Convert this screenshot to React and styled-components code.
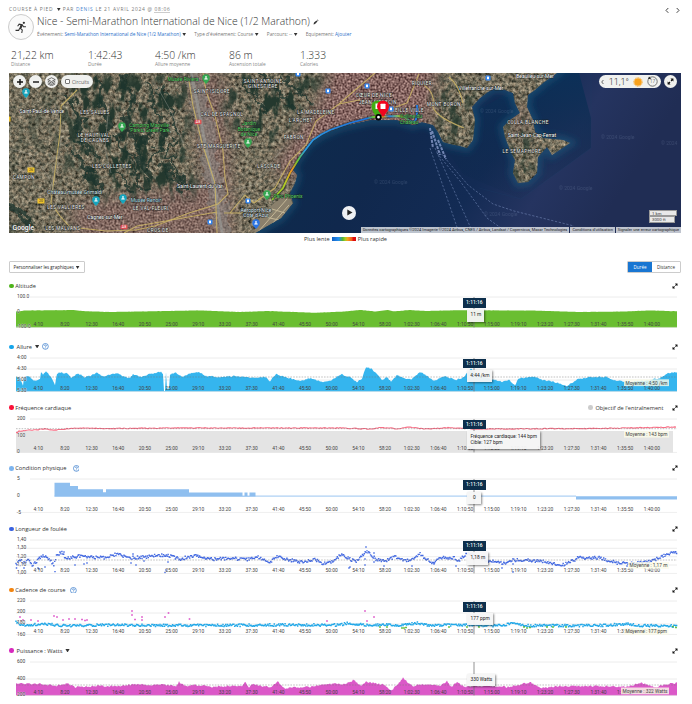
import React from "react";
import styled, { createGlobalStyle } from "styled-components";

const Global = createGlobalStyle`
  * { box-sizing: border-box; }
  body { margin: 0; background: #fff; color: #3a3a3a; font-family: "Open Sans", "Noto Sans", sans-serif; }
`;
const Page = styled.main`
  width: 692px; height: 704px; overflow: hidden; padding: 5px 11px 0 9px;
  display: flex; flex-direction: column;
  > * { flex-shrink: 0; }
`;
const TopLine = styled.div`
  display: flex; justify-content: space-between; height: 9px;
`;
const Crumb = styled.div`
  font-size: 4.9px; line-height: 9px; letter-spacing: 0.7px; color: #777; white-space: pre;
  a { color: #4a86cf; }
  u { text-decoration: none; border-bottom: 0.6px solid #ccc; }
`;
const Arrows = styled.div`
  display: flex; gap: 7px; padding: 2px 1px 0 0;
`;
const TitleRow = styled.header`
  display: flex; gap: 3px; height: 26px;
`;
const Avatar = styled.div`
  width: 26px; height: 26px; margin-left: -1px; border: 1px solid #ccc; border-radius: 50%;
  background: #fafafa; display: grid; place-items: center;
`;
const Title = styled.h1`
  margin: 0; display: flex; align-items: center; gap: 3px;
  font-weight: 300; font-size: 10.36px; line-height: 15px; color: #333; white-space: nowrap;
`;
const Meta = styled.div`
  display: flex; gap: 8px; font-size: 4.76px; line-height: 10px; color: #777; white-space: nowrap;
  a { color: #2a6fc9; }
`;
const Caret = styled.span`
  display: inline-block; width: 4.2px; height: 3.4px; background: #333; clip-path: polygon(0 0, 100% 0, 50% 100%);
  margin-left: ${(p) => p.$gap || 1.5}px;
`;
const Stats = styled.section`
  display: grid; grid-template-columns: 77px 67px 74px 71px auto; height: 33px; padding: 8px 0 0 2px;
`;
const Value = styled.div`
  font-size: 10.35px; line-height: 14px; font-weight: 300; color: #333;
`;
const Label = styled.div`
  font-size: 4.8px; line-height: 5px; color: #888;
`;
const MapBox = styled.section`
  position: relative; width: 672px; height: 160px; overflow: hidden;
  > svg { display: block; }
`;
const MapControls = styled.div`
  position: absolute; top: 2px; left: 4px; right: 4px; display: flex; gap: 2.5px; align-items: center;
`;
const RoundButton = styled.div`
  width: 13.4px; height: 13.4px; border-radius: 50%; background: #f0f1ef; display: grid; place-items: center;
`;
const Pill = styled.div`
  height: 13.4px; border-radius: 7px; background: #f0f1ef; display: flex; align-items: center; gap: ${(p) => p.$gap}px;
  padding: 0 ${(p) => p.$pad}px; font: 300 ${(p) => p.$size}px Roboto, sans-serif; color: #333;
  margin-left: ${(p) => (p.$push ? "auto" : 0)};
`;
const Check = styled.i`
  width: 5.5px; height: 5.5px; border: 0.7px solid #777; border-radius: 1px; background: #fff;
`;
const PlayButton = styled.div`
  position: absolute; left: 333px; top: 132.5px; width: 14px; height: 14px; border-radius: 50%;
  background: #eef0f3; display: grid; place-items: center;
`;
const Attribution = styled.div`
  position: absolute; right: 0; bottom: 0; height: 5.6px; display: flex; gap: 1px; white-space: nowrap;
  span { background: #e8ebeecc; color: #222; padding: 0 2px; font: 3.99px/5.6px Roboto, sans-serif; }
`;
const ScaleBox = styled.div`
  position: absolute; right: 4px; top: 136.5px; width: 28px;
  div { height: 6.6px; border: 0.7px solid #999; background: #e9e9e9; font: 4.3px/5px Roboto, sans-serif; padding-left: 2px; }
  div + div { width: 25.5px; }
`;
const Legend = styled.div`
  height: 12px; display: flex; justify-content: center; align-items: center; gap: 2px;
  font-size: 5.65px; padding-left: 1px; color: #333;
`;
const Speed = styled.i`
  width: 24px; height: 3.6px;
  background: linear-gradient(90deg, #1261c4, #248ff0 28%, #55b52e 45%, #a8cc22 55%, #f6a01b 65%, #ef5a20 83%, #e00d0d 88%);
`;
const Toolbar = styled.div`
  display: flex; justify-content: space-between; margin: 16px 0 8px; height: 12px;
`;
const Button = styled.div`
  width: 76px; height: 12px; border: 0.8px solid #ccc; border-radius: 1px; padding-left: 3.5px;
  font-size: 4.5px; line-height: 10px; color: #222; white-space: nowrap;
`;
const Toggle = styled.div`
  display: flex; width: 54px; height: 12px; border: 0.8px solid #ccc; border-radius: 1px; overflow: hidden;
`;
const Option = styled.div`
  flex: ${(p) => (p.$active ? "0 0 24px" : "1")}; text-align: center; font-size: 4.5px; line-height: 10.5px;
  background: ${(p) => (p.$active ? "#1976d2" : "#fff")}; color: ${(p) => (p.$active ? "#fff" : "#333")};
`;
const ChartSection = styled.section`
  position: relative; height: 60.8px;
  > svg { display: block; }
`;
const ChartHeader = styled.div`
  height: 10px; display: flex; align-items: center; font-size: 5.68px; color: #333; padding-right: 3px; white-space: nowrap;
`;
const Dot = styled.i`
  width: 4.6px; height: 4.6px; border-radius: 50%; background: ${(p) => p.$color}; margin-right: ${(p) => p.$gap}px;
`;
const Spacer = styled.div`
  flex: 1;
`;
const Goal = styled.div`
  display: flex; align-items: center; margin-right: 8.5px; font-size: 5.6px;
`;
const HelpIcon = styled.svg`
  width: 6.8px; height: 6.8px; margin-left: ${(p) => p.$gap}px;
`;
const Flag = styled.div`
  position: absolute; left: 454px; top: 17px; width: 22.7px; height: 9.6px; background: #0d2f4c; color: #fff;
  font: 500 4.9px/9.6px Roboto, sans-serif; text-align: center;
`;
const Tip = styled.div`
  position: absolute; left: 458.4px; top: 28.3px; width: ${(p) => p.$w}px; padding: 3px 0; box-shadow: 0.5px 1px 2px #0007;
  background: #f6f6f6f2; color: #222; font: 4.85px/6.2px Roboto, sans-serif; text-align: ${(p) => (p.$left ? "left" : "center")};
  padding-left: ${(p) => (p.$left ? 3 : 0)}px; white-space: pre;
`;

const Expand = ({ size = 6 }) => (
  <svg width={size} height={size} viewBox="0 0 12 12" fill="#111">
    <path d="M6 1h5v5L9.2 4.3 7.6 5.9 6.1 4.4l1.6-1.6zM1 6l1.8 1.7 1.6-1.6 1.5 1.5-1.6 1.6L6 11H1z" />
  </svg>
);

/* Deterministic noise so that every render draws the same curves */
const makeRandom = (seed) => {
  let s = seed;
  return () => ((s = (s * 16807) % 2147483647) - 1) / 2147483646;
};
const interp = (pts, x) => {
  for (let i = 1; i < pts.length; i++) {
    if (x <= pts[i][0]) {
      const [a, b] = [pts[i - 1], pts[i]];
      return a[1] + ((b[1] - a[1]) * (x - a[0])) / (b[0] - a[0]);
    }
  }
  return pts[pts.length - 1][1];
};
const samples = (pts, noise, seed, step = 1) => {
  const r = makeRandom(seed);
  const out = [];
  for (let x = 16; x <= 677; x += step) out.push([x, interp(pts, x) + (r() - 0.5) * noise]);
  return out;
};
const areaPath = (pts, base) => `M16 ${base}${pts.map(([x, y]) => `L${x} ${y.toFixed(2)}`).join("")}L677 ${base}Z`;

const TICKS = Array.from({ length: 24 }, (_, i) => {
  const total = (i + 1) * 250;
  const h = Math.floor(total / 3600);
  const m = Math.floor((total % 3600) / 60);
  const s = String(total % 60).padStart(2, "0");
  return h ? `${h}:${String(m).padStart(2, "0")}:${s}` : `${m}:${s}`;
});

const altitude = samples([[16, 14.5], [26, 13.5], [72, 13], [85, 14.2], [110, 15], [200, 13.4], [240, 15], [268, 14], [315, 15.8], [345, 14.5], [360, 12.9], [375, 14.5], [388, 13], [394, 14.4], [410, 13], [425, 14], [460, 13.2], [535, 13.6], [580, 15], [625, 14.5], [650, 13.4], [677, 14.3]], 0.2, 9);
const pace = samples([[16, 19], [20, 20], [23, 27], [24, 20], [29, 18], [34, 23], [40, 21], [41, 14], [43, 16], [46, 13], [51, 19], [55, 27], [57, 16], [61, 14], [64, 16], [67, 15], [71, 20], [78, 15], [84, 19], [90, 18], [97, 15], [103, 18], [117, 15], [125, 19], [130, 20], [133, 16], [140, 19], [150, 16], [161, 14], [163, 16], [164, 33], [165, 33], [166, 14], [167, 31], [169, 31], [170, 16], [176, 15], [182, 19], [191, 15], [199, 14], [205, 18], [220, 19], [235, 18], [250, 20], [265, 19], [270, 23], [276, 16], [288, 20], [302, 23], [310, 20], [322, 24], [332, 22], [341, 16], [350, 19], [357, 24], [362, 21], [366, 9], [372, 11], [382, 22], [387, 19], [391, 24], [397, 17], [405, 21], [412, 21], [420, 14], [427, 18], [435, 23], [445, 18], [456, 22], [464, 19], [471, 10], [478, 17], [488, 20], [502, 24], [509, 22], [515, 27], [519, 20], [535, 19], [543, 22], [555, 24], [567, 28], [578, 21], [590, 19], [606, 19], [617, 23], [632, 24], [650, 22], [660, 20], [668, 15], [677, 14]], 1.4, 81);
const pulse = samples([[16, 14], [19, 12], [45, 10], [55, 11], [75, 9], [100, 9.5], [190, 9], [340, 9], [370, 10], [382, 8.6], [400, 10], [407, 8], [425, 10], [450, 8.7], [475, 10], [600, 9.5], [677, 8]], 0.8, 15, 1.5);
const stride = samples([[16, 25], [20, 20], [24, 23], [28, 19], [32, 25], [36, 22], [42, 16], [48, 18], [54, 25], [57, 14], [62, 13], [66, 19], [78, 16], [92, 17], [104, 18], [117, 14], [127, 18], [145, 17], [160, 15], [170, 16], [180, 19], [197, 15], [206, 19], [220, 19], [232, 18], [245, 20], [258, 17], [270, 23], [277, 16], [289, 20], [302, 22], [315, 19], [322, 24], [332, 22], [341, 15], [350, 19], [356, 22], [367, 11], [376, 19], [385, 21], [395, 17], [409, 21], [420, 14], [432, 23], [442, 18], [454, 18], [459, 20], [468, 13], [476, 17], [490, 21], [505, 24], [512, 20], [540, 21], [563, 25], [578, 18], [600, 18], [617, 23], [640, 23], [652, 21], [667, 14], [677, 12]], 3, 44, 0.9);
const cadence = samples([[16, 21.5], [23, 24], [45, 23], [68, 25], [100, 24], [180, 24.5], [280, 24], [340, 24], [347, 22.5], [365, 24], [405, 24], [418, 22], [425, 24], [500, 24.5], [513, 22.5], [525, 24.7], [600, 24.5], [629, 23], [640, 24.5], [677, 25]], 2.4, 73, 0.9);
const power = samples([[16, 22], [40, 21.5], [54, 24], [68, 21.5], [75, 25], [100, 24], [122, 24], [133, 22], [148, 23], [160, 22.5], [176, 24], [179, 20], [185, 24], [196, 23], [212, 25], [230, 24], [242, 24], [245, 19.5], [249, 25], [252, 22], [270, 25.5], [278, 20], [284, 26], [309, 25], [326, 22], [345, 22], [354, 18], [361, 24], [366, 20], [374, 21], [384, 23], [391, 29], [397, 23], [403, 16], [412, 24], [424, 22], [440, 24], [447, 19], [451, 25], [457, 20], [464, 25], [480, 24], [510, 25], [530, 20], [540, 26], [560, 24], [600, 24], [625, 25], [642, 21], [655, 25], [668, 22], [677, 21]], 1.8, 64);

const Dots = ({ points, color, size = 1.45 }) => (
  <path fill={color} d={points.map(([x, y]) => `M${(x - size / 2).toFixed(2)} ${(y - size / 2).toFixed(2)}h${size}v${size}h-${size}z`).join("")} />
);
const strideOutliers = [[16.5, 28], [24, 28], [38, 28], [39, 29], [45, 27], [55, 31.6], [75, 25], [84, 24], [87, 23], [131, 23], [133, 14], [136, 25], [165, 32.5], [166, 30], [168, 22], [349, 28], [350, 27], [365, 19], [366, 7], [365, 25], [374, 13], [374, 22], [384, 26], [412, 26], [434, 24], [456, 26], [470, 10], [502, 28], [513, 24], [513, 32], [627, 26], [144, 21], [60, 12], [64, 12]];
const cadenceHigh = [[20, 16], [23, 19], [31, 19], [38, 20], [54, 15], [57, 16], [63, 19], [69, 18], [75, 18], [82, 18.5], [85, 19.5], [87, 19], [132, 10], [132, 14], [135, 18.5], [142, 16], [142, 19], [165, 16], [168.5, 12], [189.5, 18], [327, 20], [365, 10], [367, 20], [374, 16]];
const cadenceLow = [[380, 26], [387, 26], [402, 27], [404, 27], [406, 26.5], [449, 26], [467, 26], [479, 26], [524, 26], [527, 27], [530, 26.5], [547, 26], [553, 26], [566, 26], [673, 25.5], [676, 26.5]];

const CHARTS = [
  { title: "Altitude", color: "#4eb31b", labels: [["100.0", 0], ["0", 15], ["-100.0", 29.8]], grid: [0], bottom: 30.4, tickY: 27.1, tip: "11 m", tipW: 17,
    draw: <path d={areaPath(altitude, 30.4)} fill="#6abe31" /> },
  { title: "Allure", caret: true, help: 3, color: "#16a5ea", labels: [["4:00", 0], ["4:30", 11], ["5:00", 21.8], ["5:30", 32.8]], grid: [0, 11, 22], bottom: 33.4, tickY: 30.2, tip: "4:44 /km", tipW: 25,
    avg: "Moyenne : 4:50 /km", avgX: 624, avgY: 21.3, avgW: 45, avgLine: 19, draw: <path d={areaPath(pace, 33.4)} fill="#35b5ee" /> },
  { title: "Fréquence cardiaque", goal: true, color: "#fa1139", labels: [["200", 0], ["100", 16.8], ["0", 32.8]], grid: [0], bottom: 33.4, tickY: 29.8, tip: "Fréquence cardiaque: 144 bpm\nCible: 127 bpm", tipW: 72.5, tipLeft: true,
    avg: "Moyenne : 143 bpm", avgX: 624, avgY: 11.8, avgW: 45, avgLine: 9.7,
    draw: <><path d="M16 12h657v21.4H16z" fill="#e4e4e4" /><path d={`M${pulse.map((p) => p.join(" ")).join("L")}`} fill="none" stroke="#f76f86" strokeWidth="1.1" /></> },
  { title: "Condition physique", help: 6, color: "#7db4ee", labels: [["5", 0], ["0", 17], ["-5", 33.4]], grid: [0], bottom: 33.4, tickY: 30.4, tip: "0", tipW: 14,
    draw: <><path d="M54.5 17.5V3.8H70V7h8v3.3h25v3h3v-3h83v3.3h53.5v3.4h2v-3.4h3v3.4h2v-3.4h6v3.9z" fill="#8fbfef" /><path d="M54.5 17.1H576" stroke="#8fbfef" strokeWidth=".9" /><path d="M576 17.2h101v3.4H576z" fill="#8fbfef" /></> },
  { title: "Longueur de foulée", color: "#3a62e0", labels: [["1,40", 0], ["1,30", 8.3], ["1,20", 16.7], ["1,10", 25], ["1,00", 33.3]], grid: [0, 8.3, 16.7, 25], bottom: 33.4, tickY: 30.2, tip: "1,18 m", tipW: 21,
    avg: "Moyenne : 1,17 m", avgX: 628, avgY: 22, avgW: 41, avgLine: 20, draw: <Dots points={[...stride, ...strideOutliers]} color="#456be2" /> },
  { title: "Cadence de course", help: 5, color: "#f28511", labels: [["220", 0], ["200", 11.2], ["180", 22.3], ["160", 33.4]], grid: [0, 12, 23], bottom: 33.4, tickY: 30.4, tip: "177 ppm", tipW: 25.5,
    avg: "Moyenne : 177 ppm", avgX: 624, avgY: 27, avgW: 44.5,
    draw: <><Dots points={cadence} color="#22a8e8" size={1.5} /><Dots points={cadenceHigh} color="#da4ac5" size={1.6} /><Dots points={cadenceLow} color="#54b82b" size={1.7} /></> },
  { title: "Puissance : Watts", caret: true, color: "#d629bd", labels: [["600", 0], ["400", 16.9], ["200", 33]], grid: [0, 17], bottom: 33.4, tickY: 30.2, tip: "330 Watts", tipW: 28, noFlag: true,
    avg: "Moyenne : 322 Watts", avgX: 621, avgY: 25.5, avgW: 48, avgLine: 23, draw: <path d={areaPath(power, 33.4)} fill="#db58c8" /> },
];

const Help = ({ gap }) => (
  <HelpIcon $gap={gap} viewBox="0 0 14 14" fill="none" stroke="#2a72c9" strokeWidth="1.4">
    <circle cx="7" cy="7" r="6" /><path d="M5 5.6Q5 4 7 4T9 5.6Q9 6.6 7.6 7.2 7 7.5 7 8.6M7 9.6v1.4" />
  </HelpIcon>
);

const Chart = ({ c }) => (
  <ChartSection>
    <ChartHeader>
      <Dot $color={c.color} $gap={c.caret ? 3 : 1.7} />
      {c.title}
      {c.caret && <Caret $gap={3} />}
      {c.help && <Help gap={c.help} />}
      <Spacer />
      {c.goal && <Goal><Dot $color="#ccc" $gap={2.5} />Objectif de l'entraînement</Goal>}
      <Expand />
    </ChartHeader>
    <svg width="672" height="42" viewBox="9 -6 672 42" fontFamily="Roboto, sans-serif" fontSize="4.9" fill="#444">
      {c.grid.map((y) => <path key={y} d={`M${y === 0 ? 30 : 16} ${y}H677`} stroke="#e7e7e7" strokeWidth=".8" />)}
      {c.draw}
      <path d={`M16 ${c.bottom}H677`} stroke="#ddd" strokeWidth=".5" />
      {c.avgLine && <path d={`M16 ${c.avgLine}H677`} stroke="#777" strokeOpacity=".65" strokeWidth=".7" strokeDasharray="1.6 1.2" />}
      <path d={`M474 0V${c.bottom}`} stroke="#777" strokeWidth=".8" />
      {c.labels.map(([t, y]) => <text key={t} x="17" y={y + 1.1} stroke="#fff" strokeOpacity=".6" strokeWidth=".7" paintOrder="stroke">{t}</text>)}
      {TICKS.map((t, i) => <text key={t} x={38.2 + i * 26.68} y={c.tickY + 1.6} textAnchor="middle">{t}</text>)}
      {c.avg && (
        <g>
          <rect x={c.avgX} y={c.avgY} width={c.avgW} height="6.8" fill="#fbfbe9" fillOpacity=".8" />
          <text x={c.avgX + 1.5} y={c.avgY + 5.2} textLength={c.avgW - 3} lengthAdjust="spacingAndGlyphs">{c.avg}</text>
        </g>
      )}
    </svg>
    {!c.noFlag && <Flag>1:11:16</Flag>}
    <Tip $w={c.tipW} $left={c.tipLeft}>{c.tip}</Tip>
  </ChartSection>
);

const LAND = "M0 0H548L534 10 526 17 519 22 518 34 524 47 526 59 534 65 554 67 561 70 543 82 538 74 529 84 528 100 519 109 509 110 504 100 506 87 501 77 496 64 494 54 501 47 511 40 506 30 504 20 496 17 488 14 479 19 471 25 463 34 466 47 464 67 458 75 451 73 441 71 434 69 429 59 424 52 413 49 404 52 398 50 388 47 361 47 334 53 314 61 299 71 288 87 283 96 288 102 286 110 281 120 284 130 272 145 246 160H0Z";
const ROUTE = "M263 127L274 115 281 100 291 84 304 67Q312 61 321 57L341 50 364 44 388 43Q395 43 398 46T404 49 408 42L408 32";

const PLACES = [
  ["SAINT-ANTOINE", 254, 10], ["GINESTIÈRE", 254, 15], ["CŒUR DE NICE", 365, 24], ["JEAN-MÉDECIN", 369, 31], ["RIQUIER", 413, 12],
  ["MONT BORON", 435, 33], ["LA MADELEINE", 307, 41], ["L'ARCHET", 292, 49], ["FABRON", 285, 66], ["LASCADE", 260, 95], ["VIEILLE VILLE", 398, 39],
  ["SAINT-ISIDORE", 203, 20], ["CAL DE SPAGNOL", 213, 43], ["STE MARGUERITE", 210, 75], ["LES SALLES", 86, 41], ["LE HAUT VAL", 85, 64],
  ["DE CAGNES", 86, 69], ["LES COLLETTES", 103, 95], ["CAMPON", 15, 106], ["LES VALLIÈRES", 57, 136], ["LE VAL FLEURI", 142, 136.5],
  ["LES MALVANS", 54, 157], ["CROS DE", 149, 159], ["COLLA BLANCHE", 519, 51], ["LE SÉMAPHORE", 513, 79.5],
];
const TOWNS = [
  ["Saint-Paul-de-Vence", 33, 39.5, "#fff"], ["Cagnes-sur-Mer", 96, 146, "#fff"], ["Saint-Laurent-du-Var", 191, 115, "#fff"],
  ["Château-musée Grimaldi", 66, 121, "#d8e8ee"], ["Musée Renoir", 137, 129, "#a9dce4"], ["Villefranche-sur-Mer", 472, 16.5, "#fff"],
  ["Beaulieu-sur-Mer", 526, 5, "#fff"], ["Saint-Jean-Cap-Ferrat", 523, 63.5, "#fff"], ["Aéroport Nice", 247, 138.5, "#dce7f5"], ["Côte d'Azur", 247, 144, "#dce7f5"],
  ["Camping Maoville", 140, 53.5, "#58cf62"], ["Parks, Green Park", 141, 59, "#58cf62"], ["Musée Riviera", 174, 8, "#58cf62"], ["Jardin", 240, 52, "#58cf62"],
  ["Botanique", 240, 57.5, "#58cf62"], ["de Nice", 240, 63, "#58cf62"], ["Parc Phoenix", 279, 125, "#58cf62"], ["Colline du", 402, 45, "#58cf62"], ["Château", 400, 50.5, "#58cf62"],
];
const PINS = [[17, 19, "#17a5bd"], [87, 127, "#17a5bd"], [114, 125, "#17a5bd"], [113, 53, "#36a852"], [197, 5, "#36a852"], [239, 69, "#36a852"], [258, 121, "#36a852"], [247, 150, "#2b74e2"]];
const ROADS = [
  "M68 17Q61 24 52 33L51 60 45 105 42 130 51 143 61 154 97 158 127 157 146 153 180 140 209 131 219 121 216 105 214 78 206 43 197 18 194 0",
  "M208 160L206 110 193 70 184 33 180 8", "M221 140Q229 130 236 122L245 130 266 115 281 88 297 72 307 48 330 31 345 18 366 0",
  "M330 31L350 27 381 36 398 30 410 1", "M415 12Q426 20 424 31T455 55", "M440 4Q450 12 454 30", "M115 160L128 153 208 139", "M215 140L232 140 239 136",
];

const MapDrawing = () => (
  <svg width="672" height="160" viewBox="0 0 672 160">
    <defs>
      <linearGradient id="sea" x1="0" x2="1" y1="0" y2=".15">
        <stop offset=".38" stopColor="#0c2c4c" /><stop offset=".62" stopColor="#10284d" /><stop offset=".78" stopColor="#132b54" /><stop offset=".88" stopColor="#253460" /><stop offset="1" stopColor="#202d54" />
      </linearGradient>
      <linearGradient id="deep" x1="0" x2="0" y1="0" y2="1"><stop offset="0" stopColor="#0c3058" /><stop offset="1" stopColor="#0d2749" stopOpacity=".1" /></linearGradient>
      <linearGradient id="pace" gradientUnits="userSpaceOnUse" x1="262" y1="127" x2="408" y2="40">
        <stop offset="0" stopColor="#86c92b" /><stop offset=".12" stopColor="#b4cc25" /><stop offset=".2" stopColor="#ef8f23" /><stop offset=".25" stopColor="#6ec72c" /><stop offset=".32" stopColor="#2d9bdf" /><stop offset=".73" stopColor="#1b72df" /><stop offset=".77" stopColor="#6fc52b" /><stop offset=".82" stopColor="#df9c21" /><stop offset=".85" stopColor="#2480e5" /><stop offset=".91" stopColor="#a4cf26" /><stop offset=".96" stopColor="#2480e5" />
      </linearGradient>
      <filter id="ground" x="0" y="0" width="1" height="1" colorInterpolationFilters="sRGB">
        <feTurbulence type="fractalNoise" baseFrequency=".3" numOctaves="4" seed="7" />
        <feColorMatrix values=".85 .2 0 0 -.07  .75 .25 0 0 -.07  .65 .25 0 0 -.09  0 0 0 0 1" />
      </filter>
      <filter id="woods" x="0" y="0" width="1" height="1" colorInterpolationFilters="sRGB">
        <feTurbulence type="fractalNoise" baseFrequency=".1 .05" numOctaves="4" seed="21" />
        <feColorMatrix values="0 0 0 0 .14  0 0 0 0 .22  0 0 0 0 .18  6 0 0 0 -2.95" />
      </filter>
      <filter id="soft" x="-.2" y="-.2" width="1.4" height="1.4"><feGaussianBlur stdDeviation="8" /></filter>
      <filter id="shoal" x="-.1" y="-.1" width="1.2" height="1.2"><feGaussianBlur stdDeviation="3" /></filter>
      <filter id="ragged" x="-.1" y="-.1" width="1.2" height="1.2" colorInterpolationFilters="sRGB">
        <feTurbulence type="fractalNoise" baseFrequency=".11" numOctaves="3" seed="5" />
        <feDisplacementMap in="SourceGraphic" scale="20" xChannelSelector="R" yChannelSelector="G" />
      </filter>
      <filter id="town" x="0" y="0" width="1" height="1" colorInterpolationFilters="sRGB">
        <feTurbulence type="fractalNoise" baseFrequency=".5" numOctaves="3" seed="3" />
        <feColorMatrix values=".9 0 0 0 .07  .85 0 0 0 -.03  .8 0 0 0 -.02  0 0 0 0 1" />
      </filter>
      <clipPath id="landClip"><path d={LAND} /></clipPath>
      <mask id="forest"><g fill="#fff" filter="url(#soft)"><path d="M50 0H180L178 80 190 120 135 122 80 125 60 80 45 45Z" /><path d="M215 0H315L285 55 255 75 218 50Z" /><path d="M0 120L25 150V160H0Z" /><path d="M424 5L465 10 460 75 430 65ZM495 30L525 55 525 110 500 110Z" fill="#ccc" /><path d="M0 0H60V110H0Z" fill="#444" /></g></mask>
      <mask id="urban"><g filter="url(#soft)"><path d="M325 -20H430L418 65 345 65 300 85 285 110 265 95 310 30Z" fill="#fff" /><path d="M60 132L195 110 180 0 215 0 225 170H70Z" fill="#bbb" /><path d="M500 30L520 40 520 60 505 60Z" fill="#999" /></g></mask>
    </defs>
    <rect width="672" height="160" fill="url(#sea)" />
    <path d="M548 0H570L582 45V75L512 126 455 102 425 60 500 20Z" fill="url(#deep)" />
    <path d="M582 0V75L512 126 470 115" fill="none" stroke="#1d4d72" strokeOpacity=".15" />
    <path d={LAND} fill="none" stroke="#1c5c80" strokeOpacity=".55" strokeWidth="8" filter="url(#shoal)" />
    <g clipPath="url(#landClip)">
      <rect width="672" height="160" filter="url(#ground)" />
      <g mask="url(#urban)"><rect width="672" height="160" filter="url(#town)" /></g>
      <g mask="url(#forest)"><rect width="672" height="160" filter="url(#woods)" /></g>
      <g fill="none" stroke="#1b332c" strokeOpacity=".75" strokeLinecap="round" filter="url(#ragged)">
        <path strokeWidth="5" d="M62 27L72 47 68 64 85 80M90 5L93 31 100 50 98 69M115 5L126 30 117 47 124 65 130 82M73 94L87 108 92 121M142 54L134 70 130 86 141 104M1 131L10 140 24 155M155 92L168 107 177 118" />
        <path strokeWidth="3" d="M108 60L112 75 124 84M160 65L145 79 135 98M138 9L144 34 155 48M105 98L116 104 121 119M232 7L246 24 257 36M251 2L270 18 282 33M271 3L288 17 299 30M120 85L128 105 134 118M165 70L158 84 170 100M150 15L162 35 170 60M58 75L75 90 80 105" />
      </g>
      <path d="M180 0L190 0 200 33 205 70 216 112 222 160H208L198 116 192 78 183 35Z" fill="#8b8b88" opacity=".45" filter="url(#ragged)" />
      <path d="M182 0L189 33 197 75 206 116 213 160" stroke="#9a9b98" strokeWidth="3" opacity=".6" fill="none" />
      <path d="M245 160L251 145 265 130 279 121 284 131 271 147 258 160Z" fill="#8a806c" />
      <path d="M249 159L278 126M255 160L280 132M256 144L270 147M263 136L276 140" stroke="#c4b797" strokeWidth="1" fill="none" />
      {ROADS.map((d) => <path key={d} d={d} fill="none" stroke="#ccb566" strokeWidth="1.1" opacity=".85" />)}
      <path d="M0 75L20 81 38 100 51 130M45 30Q57 60 49 82T44 120M100 30L96 75 102 100M146 10L163 40 174 70M220 118L245 112 274 75" fill="none" stroke="#a5a297" strokeWidth=".6" opacity=".7" />
    </g>
    <g fill="none" stroke="#92a8d8" strokeWidth=".7" strokeDasharray="2.3 1.6" opacity=".6">
      <path d="M426 75L464 160M430 78L459 112 484 131 505 138 565 153M421 75L450 160M428 80L451 108 478 145 492 155" />
    </g>
    <path d="M421 55L424 75M423 58L431 82M429 67L437 86" stroke="#9bacdc" strokeWidth="2" strokeDasharray="3 1" opacity=".7" />
    <path d={ROUTE} fill="none" stroke="#1a2633" strokeWidth="3" strokeOpacity=".55" />
    <path d={ROUTE} fill="none" stroke="url(#pace)" strokeWidth="1.8" />
    <g fontFamily="Roboto, sans-serif" textAnchor="middle" paintOrder="stroke" stroke="#18201e" strokeOpacity=".75" strokeWidth="1">
      {PLACES.map(([t, x, y]) => <text key={t} x={x} y={y} fontSize="4.6" letterSpacing=".45" fill="#f3f3f0">{t}</text>)}
      {TOWNS.map(([t, x, y, f]) => <text key={t} x={x} y={y} fontSize="5" fill={f}>{t}</text>)}
    </g>
    <g fontFamily="Roboto, sans-serif" fontSize="5" fill="#a7b8d6" opacity=".18">
      <text x="365" y="111">© 2024 Google</text><text x="471" y="40">© 2024 Google</text><text x="592" y="66">© 2024 Google</text><text x="550" y="117">© 2024 Google</text><text x="475" y="143">© 2024 Google</text><text x="652" y="72">© 2024</text>
    </g>
    {PINS.map(([x, y, f]) => (
      <g key={`${x}-${y}`}><path d={`M${x} ${y + 6}Q${x - 3.8} ${y + 2} ${x - 3.8} ${y}A3.8 3.8 0 1 1 ${x + 3.8} ${y}Q${x + 3.8} ${y + 2} ${x} ${y + 6}`} fill={f} /><path d={`M${x - 1.7} ${y + 1}h3.4M${x} ${y - 2}v3`} stroke="#fff" strokeWidth="1.2" /></g>
    ))}
    {[[289, 1], [319, 18], [358, 13], [479, 5], [239, 128], [201, 149], [382, 36]].map(([x, y]) => (
      <g key={`${x}-${y}`}><rect x={x - 2.5} y={y - 2.5} width="5" height="5" rx="1" fill="#3284ed" /><rect x={x - 1} y={y - 1.4} width="2" height="2.6" fill="#fff" /></g>
    ))}
    <g fontFamily="Roboto, sans-serif" fontSize="3.5" textAnchor="middle">
      {[[22, 97, "26"], [32, 128, "20"]].map(([x, y, t]) => <g key={t}><rect x={x - 3.5} y={y - 2.5} width="7" height="5" fill="#efc22c" /><text x={x} y={y + 1.3} fill="#333">{t}</text></g>)}
      <rect x="0" y="43.5" width="1.5" height="5" fill="#efc22c" />
      {[[189, 49], [115, 154]].map(([x, y]) => <g key={x}><rect x={x - 3.5} y={y - 2.3} width="7" height="4.6" rx="1" fill="#d84c52" /><text x={x} y={y + 1.2} fill="#fff">A8</text></g>)}
    </g>
    <path d="M369 46Q362.5 38 362.5 33.5A6 6 0 0 1 374.5 33.5Q374.5 38 369 46" fill="#42ae13" /><rect x="366.5" y="30.5" width="5" height="5.5" fill="#fff" />
    <circle cx="369.5" cy="44.2" r="2.3" fill="#fff" stroke="#000" strokeWidth="1.8" />
    <path d="M374 44Q368 36.5 368 33.5A6 6 0 0 1 380 33.5Q380 37 374 44" fill="#f0051f" /><rect x="371.5" y="30.8" width="5" height="5.2" rx=".5" fill="#fff" />
    <text x="3.5" y="157" fontFamily="Roboto, sans-serif" fontWeight="500" fontSize="6.8" fill="#fff" stroke="#333" strokeWidth=".4" paintOrder="stroke">Google</text>
  </svg>
);

export default function App() {
  return (
    <Page>
      <Global />
      <TopLine>
        <Crumb>COURSE À PIED <Caret /> PAR <a>DENIS</a> LE 21 AVRIL 2024 @ <u>08:06</u></Crumb>
        <Arrows>
          <svg width="4" height="7" viewBox="0 0 4 7"><path d="M3.3 1L1 3.4l2.3 2.4" fill="none" stroke="#444" /></svg>
          <svg width="4" height="7" viewBox="0 0 4 7"><path d="M.7 1L3 3.4.7 5.8" fill="none" stroke="#444" /></svg>
        </Arrows>
      </TopLine>
      <TitleRow>
        <Avatar>
          <svg width="12.5" height="12.5" viewBox="0 0 24 24" fill="none" stroke="#333" strokeWidth="2">
            <circle cx="17" cy="3.5" r="2.2" fill="#333" stroke="none" /><path d="M5 10l3-4 6 1 2 4h5M13 8l-3 6 4 3-1 6M9 14l-2 4H1" /><path d="M12.5 8l-2 6" strokeWidth="4" />
          </svg>
        </Avatar>
        <div>
          <Title>Nice - Semi-Marathon International de Nice (1/2 Marathon)
            <svg width="6" height="6" viewBox="0 0 12 12" fill="#333"><path d="M1 11l1-4 5-4 2 2-5 5zM8 2l1-1 2 2-1 1z" /></svg>
          </Title>
          <Meta>
            <span>Événement: <a>Semi-Marathon International de Nice (1/2 Marathon)</a><Caret /></span>
            <span>Type d'événement: Course<Caret /></span>
            <span>Parcours: --<Caret /></span>
            <span>Equipement: <a>Ajouter</a></span>
          </Meta>
        </div>
      </TitleRow>
      <Stats>
        {[["21,22 km", "Distance"], ["1:42:43", "Durée"], ["4:50 /km", "Allure moyenne"], ["86 m", "Ascension totale"], ["1.333", "Calories"]].map(([v, l]) => (
          <div key={l}><Value>{v}</Value><Label>{l}</Label></div>
        ))}
      </Stats>
      <MapBox>
        <MapDrawing />
        <MapControls>
          <RoundButton><svg width="8" height="8" viewBox="0 0 8 8"><path d="M4 1v6M1 4h6" stroke="#111" strokeWidth="1.4" /></svg></RoundButton>
          <RoundButton><svg width="8" height="8" viewBox="0 0 8 8"><path d="M1 4h6" stroke="#111" strokeWidth="1.4" /></svg></RoundButton>
          <RoundButton><svg width="9" height="9" viewBox="0 0 12 12" fill="none" stroke="#333" strokeWidth=".9"><path d="M6 1l5 2.5L6 6 1 3.5zM1 5.5L6 8l5-2.5M1 7.5L6 10l5-2.5M1 9.3l5 2.4 5-2.4" /></svg></RoundButton>
          <Pill $gap={1.8} $pad={4} $size={5.2}><Check />Circuits</Pill>
          <Pill $push $gap={4.3} $pad={2.7} $size={9}>
            <svg width="3" height="6" viewBox="0 0 3 6"><path d="M2.4 1L.7 3l1.7 2" fill="none" stroke="#444" strokeWidth=".8" /></svg>
            11,1°
            <svg width="10" height="10" viewBox="0 0 10 10"><circle cx="5" cy="5" r="3.8" fill="#f9a11b" /><circle cx="5" cy="5" r="4.4" fill="none" stroke="#fbb64e" strokeDasharray="1 .7" /></svg>
            <svg width="11" height="11" viewBox="0 0 11 11"><circle cx="5.5" cy="5.5" r="4.7" fill="none" stroke="#444" strokeWidth=".7" /><path d="M2 .5l2.3 2.3L1 3z" fill="#222" /><text x="5.5" y="7.3" fontSize="5" textAnchor="middle" fill="#333">17</text></svg>
          </Pill>
          <RoundButton><Expand size={7} /></RoundButton>
        </MapControls>
        <PlayButton><svg width="7" height="7" viewBox="0 0 7 7"><path d="M1.3.4L6.5 3.5 1.3 6.6z" fill="#222" /></svg></PlayButton>
        <ScaleBox><div>1 km</div><div>3000 ft</div></ScaleBox>
        <Attribution><span>Données cartographiques ©2024 Imagerie ©2024 Airbus, CNES / Airbus, Landsat / Copernicus, Maxar Technologies</span><span>Conditions d'utilisation</span><span>Signaler une erreur cartographique</span></Attribution>
      </MapBox>
      <Legend>Plus lente<Speed />Plus rapide</Legend>
      <Toolbar>
        <Button>Personnaliser les graphiques<Caret /></Button>
        <Toggle><Option $active>Durée</Option><Option>Distance</Option></Toggle>
      </Toolbar>
      {CHARTS.map((c) => <Chart key={c.title} c={c} />)}
    </Page>
  );
}
